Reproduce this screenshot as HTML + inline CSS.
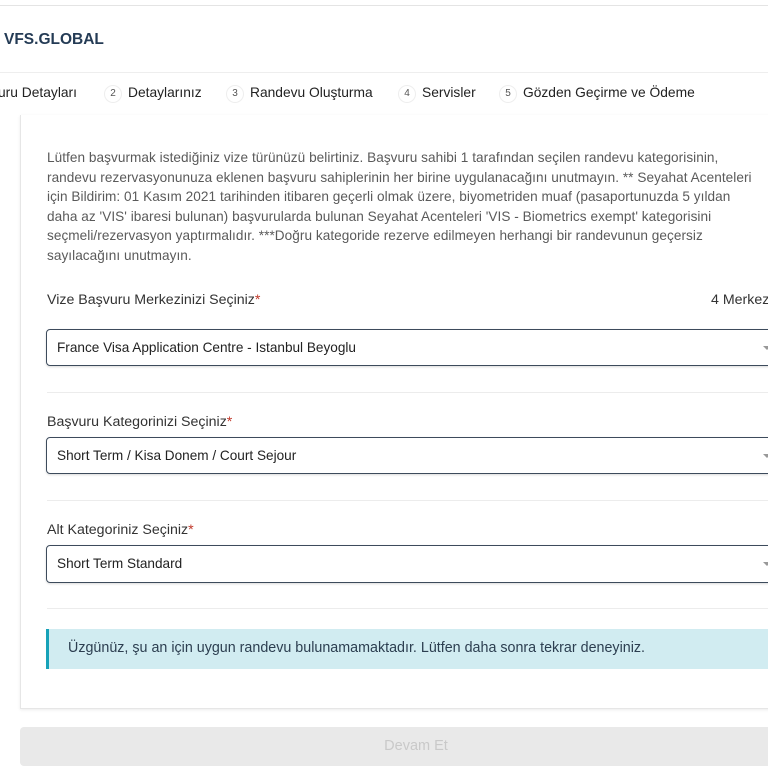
<!DOCTYPE html>
<html><head><meta charset="utf-8"><style>
*{box-sizing:border-box;margin:0;padding:0}
body{width:768px;height:768px;overflow:hidden;background:#fff;font-family:"Liberation Sans",sans-serif;position:relative;color:#333}
.abs{position:absolute;white-space:nowrap}
.topline{position:absolute;left:0;top:5px;width:768px;height:1px;background:#e4e4e4}
.logo{left:4px;top:31px;font-size:15.5px;font-weight:bold;color:#243b55;letter-spacing:0}
.navline{position:absolute;left:0;top:72px;width:768px;height:1px;background:#eee}
.nav{top:85px;font-size:13.8px;color:#222}
.num{display:inline-block;width:18px;height:18px;border-radius:50%;border:1px solid #eee;font-size:10px;text-align:center;line-height:16px;color:#555;margin-right:6px;vertical-align:1px}
.card{position:absolute;left:20px;top:115px;width:800px;height:594px;border:1px solid #e6e6e6;border-top:none;box-shadow:0 1px 3px rgba(0,0,0,.08)}
.para{position:absolute;left:47px;top:148px;white-space:nowrap;font-size:13.6px;line-height:19.6px;color:#5a5a5a;letter-spacing:0.05px}
.lbl{font-size:14.2px;color:#333}
.lbl b{color:#c0392b;font-weight:normal}
.sel{position:absolute;left:46px;width:740px;border:1px solid #3d4b5c;border-radius:4px;font-size:13.6px;color:#222;padding-left:10px;box-shadow:0 1px 2px rgba(0,0,0,.15)}
.div{position:absolute;left:47px;width:730px;height:1px;background:#ececec}
.alert{position:absolute;left:46px;top:629px;width:740px;height:40px;background:#d1ecf1;border-left:3px solid #17a2b8;font-size:14.3px;color:#2c3e50;padding:11px 0 0 19px}
.btn{position:absolute;left:20px;top:727px;width:792px;height:39px;background:#e9e9e9;border-radius:4px;text-align:center;line-height:39px;font-size:14.5px;color:#c9c9c9}
.arr{position:absolute;left:763px;width:0;height:0;border-left:4px solid transparent;border-right:4px solid transparent;border-top:4px solid #999}
</style></head><body>
<div class="topline"></div>
<div class="abs logo">VFS.GLOBAL</div>
<div class="navline"></div>
<div class="abs nav" style="left:-2px">uru Detayları</div>
<div class="abs nav" style="left:104px"><span class="num">2</span>Detaylarınız</div>
<div class="abs nav" style="left:226px"><span class="num">3</span>Randevu Oluşturma</div>
<div class="abs nav" style="left:398px"><span class="num">4</span>Servisler</div>
<div class="abs nav" style="left:499px"><span class="num">5</span>Gözden Geçirme ve Ödeme</div>
<div class="card"></div>
<div class="para">Lütfen başvurmak istediğiniz vize türünüzü belirtiniz. Başvuru sahibi 1 tarafından seçilen randevu kategorisinin,<br>randevu rezervasyonunuza eklenen başvuru sahiplerinin her birine uygulanacağını unutmayın. ** Seyahat Acenteleri<br>için Bildirim: 01 Kasım 2021 tarihinden itibaren geçerli olmak üzere, biyometriden muaf (pasaportunuzda 5 yıldan<br>daha az 'VIS' ibaresi bulunan) başvurularda bulunan Seyahat Acenteleri 'VIS - Biometrics exempt' kategorisini<br>seçmeli/rezervasyon yaptırmalıdır. ***Doğru kategoride rezerve edilmeyen herhangi bir randevunun geçersiz<br>sayılacağını unutmayın.</div>
<div class="abs lbl" style="left:47px;top:292px">Vize Başvuru Merkezinizi Seçiniz<b>*</b></div>
<div class="abs lbl" style="left:711px;top:292px">4 Merkez</div>
<div class="sel" style="top:329px;height:37px;line-height:35px">France Visa Application Centre - Istanbul Beyoglu</div>
<div class="arr" style="top:346px"></div>
<div class="div" style="top:392px"></div>
<div class="abs lbl" style="left:47px;top:414px">Başvuru Kategorinizi Seçiniz<b>*</b></div>
<div class="sel" style="top:437px;height:37px;line-height:35px">Short Term / Kisa Donem / Court Sejour</div>
<div class="arr" style="top:454px"></div>
<div class="div" style="top:500px"></div>
<div class="abs lbl" style="left:47px;top:522px">Alt Kategoriniz Seçiniz<b>*</b></div>
<div class="sel" style="top:545px;height:38px;line-height:36px">Short Term Standard</div>
<div class="arr" style="top:562px"></div>
<div class="div" style="top:608px"></div>
<div class="alert">Üzgünüz, şu an için uygun randevu bulunamamaktadır. Lütfen daha sonra tekrar deneyiniz.</div>
<div class="btn">Devam Et</div>
</body></html>
